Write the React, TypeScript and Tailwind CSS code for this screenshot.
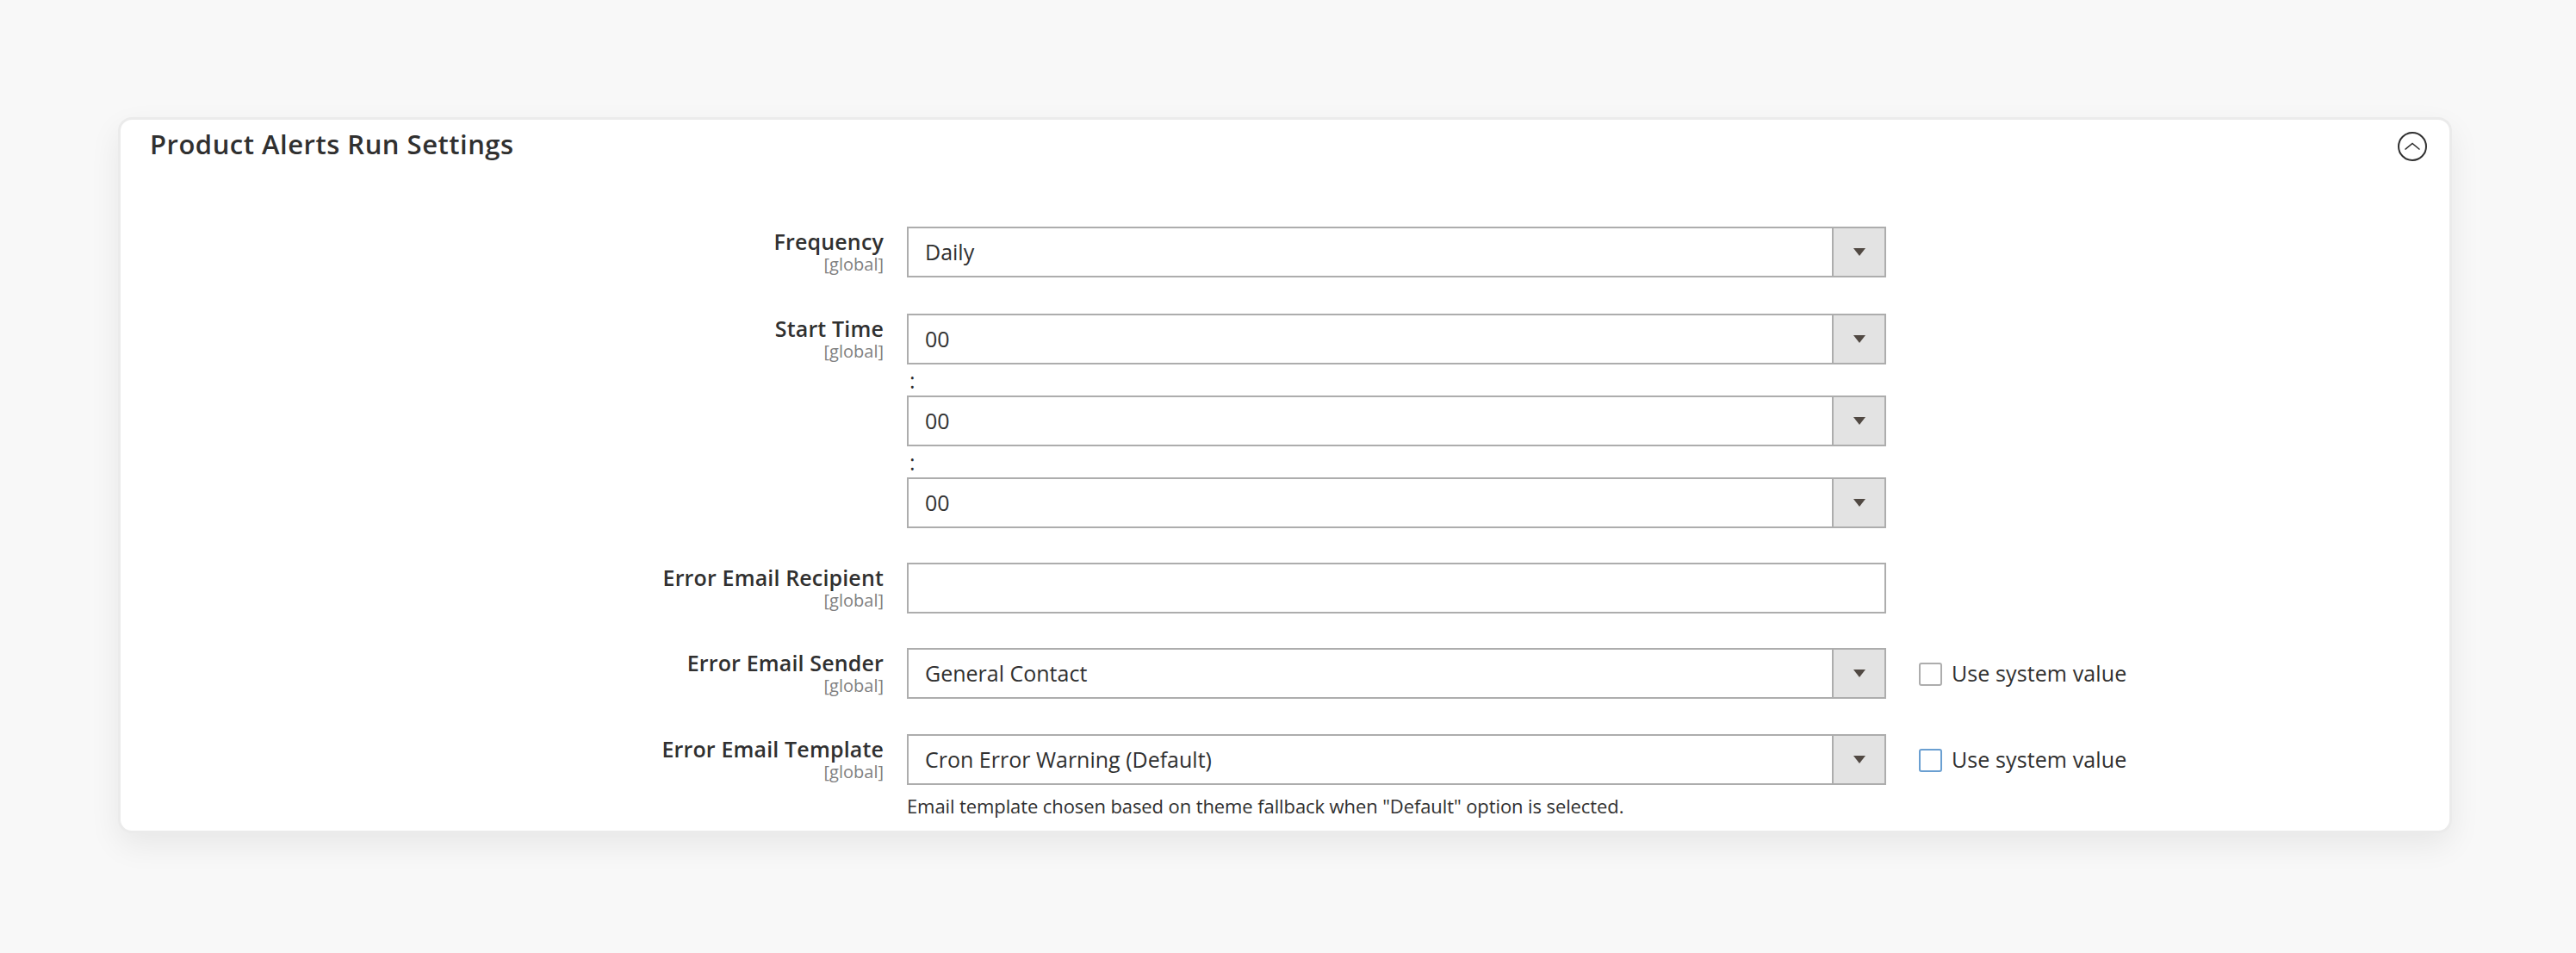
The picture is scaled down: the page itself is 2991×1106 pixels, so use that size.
import React from "react";

const font = { fontFamily: '"Open Sans", "Noto Sans", sans-serif' };

function Arrow() {
  return (
    <svg width="14" height="10" viewBox="0 0 14 10" className="block">
      <path d="M0 0 H14 L7 9 Z" fill="#514943" />
    </svg>
  );
}

function Select({ value }: { value: string }) {
  return (
    <div className="flex h-[59px] w-[1137px] items-stretch border-2 border-[#adadad] bg-white">
      <div className="flex flex-1 items-center pl-[19px] text-[25px] text-[#303030]">{value}</div>
      <div className="flex w-[61px] items-center justify-center border-l-2 border-[#adadad] bg-[#e3e3e3]">
        <Arrow />
      </div>
    </div>
  );
}

function Label({ text }: { text: string }) {
  return (
    <div className="w-[886px] shrink-0 text-right">
      <div className="text-[25px] font-semibold leading-[34px] tracking-[0.15px] text-[#303030]">{text}</div>
      <div className="text-[20px] leading-[20px] text-[#808080]">[global]</div>
    </div>
  );
}

function UseSystem({ blue }: { blue?: boolean }) {
  return (
    <div className="ml-[38px] flex h-[59px] items-center gap-[11px]">
      <div
        className={
          blue
            ? "mt-[2px] h-[27px] w-[27px] rounded-[3px] border-2 border-[#6a9fd1] bg-white"
            : "mt-[2px] h-[27px] w-[27px] rounded-[3px] border-2 border-[#adadad] bg-white"
        }
      />
      <span className="text-[25px] tracking-[0.1px] text-[#303030]">Use system value</span>
    </div>
  );
}

function Colon() {
  return (
    <div className="flex h-[36px] items-center pl-[3px] text-[25px] leading-none text-[#303030]">:</div>
  );
}

export default function App() {
  return (
    <div className="min-h-[1106px] w-full bg-[#f8f8f8] pl-[137px] pr-[144px] pt-[136px]" style={font}>
      <div className="rounded-[16px] border-[3px] border-[#ebebeb] bg-white pb-[14px] shadow-[0_14px_36px_rgba(0,0,0,0.07)]">
        <div className="flex h-[124px] items-start justify-between pl-[34px] pr-[25px]">
          <div className="pt-[7px] text-[31px] font-semibold leading-[42px] tracking-[0.5px] text-[#303030]">
            Product Alerts Run Settings
          </div>
          <svg width="36" height="36" viewBox="0 0 36 36" className="mt-[13px]">
            <circle cx="18" cy="18" r="16" fill="none" stroke="#303030" strokeWidth="2" />
            <path d="M9.5 21.5 L18 14.5 L26.5 21.5" fill="none" stroke="#303030" strokeWidth="1.6" />
          </svg>
        </div>

        <div className="flex flex-col">
          <div className="flex items-start">
            <Label text="Frequency" />
            <div className="ml-[27px]">
              <Select value="Daily" />
            </div>
          </div>

          <div className="mt-[42px] flex items-start">
            <Label text="Start Time" />
            <div className="ml-[27px] flex flex-col">
              <Select value="00" />
              <Colon />
              <Select value="00" />
              <Colon />
              <Select value="00" />
            </div>
          </div>

          <div className="mt-[40px] flex items-start">
            <Label text="Error Email Recipient" />
            <div className="ml-[27px]">
              <div className="h-[59px] w-[1137px] border-2 border-[#adadad] bg-white" />
            </div>
          </div>

          <div className="mt-[40px] flex items-start">
            <Label text="Error Email Sender" />
            <div className="ml-[27px]">
              <Select value="General Contact" />
            </div>
            <UseSystem />
          </div>

          <div className="mt-[41px] flex items-start">
            <Label text="Error Email Template" />
            <div className="ml-[27px] flex flex-col">
              <Select value="Cron Error Warning (Default)" />
              <div className="mt-[9px] text-[22px] leading-[30px] tracking-[-0.1px] text-[#303030]">
                Email template chosen based on theme fallback when &quot;Default&quot; option is selected.
              </div>
            </div>
            <UseSystem blue />
          </div>
        </div>
      </div>
    </div>
  );
}
